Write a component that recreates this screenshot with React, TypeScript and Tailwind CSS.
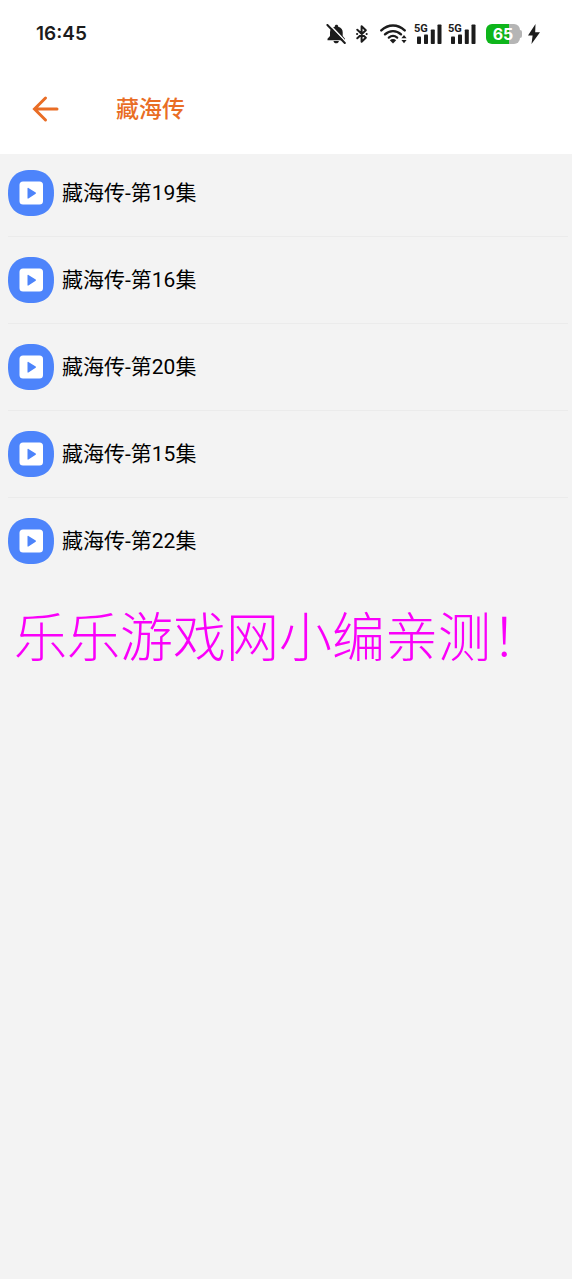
interface Episode {
  id: number;
  title: string;
}

const episodes: Episode[] = [
  { id: 19, title: "藏海传-第19集" },
  { id: 16, title: "藏海传-第16集" },
  { id: 20, title: "藏海传-第20集" },
  { id: 15, title: "藏海传-第15集" },
  { id: 22, title: "藏海传-第22集" },
];

function MutedBellIcon() {
  return (
    <svg className="w-5 h-5" viewBox="0 0 20 20" fill="currentColor" aria-hidden="true">
      <path d="M10.500 .8c1 0 1.700.7 1.700 1.600v.4c2.800.7 4.500 2.800 4.500 5.500v3.700l2.300 2.700v1.600H1.500v-1.600l2.500-2.700V8.300c0-2.700 1.900-4.800 4.800-5.500v-.4c0-.9.700-1.600 1.700-1.600z" />
      <path d="M7.500 16.900h5.400c-.2 1.400-1.300 2.300-2.700 2.300s-2.500-.9-2.700-2.300z" />
      <path d="M3.200 .2l16.600 17.600" stroke="white" strokeWidth="1.600" />
      <path d="M1.400 1l17.400 18" stroke="currentColor" strokeWidth="2" strokeLinecap="round" />
    </svg>
  );
}

function BluetoothIcon() {
  return (
    <svg className="w-3 h-5" viewBox="0 0 12 20" fill="none" stroke="currentColor" strokeWidth="2" strokeLinejoin="round" strokeLinecap="round" aria-hidden="true">
      <path d="M1.300 5.800l8.500 7.900-4.200 4V2.300l4.200 4-8.500 7.900" />
      <path d="M1 10h.2M10.600 10h.1" />
    </svg>
  );
}

function WifiIcon() {
  return (
    <svg className="w-7 h-5" viewBox="0 0 28 20" fill="none" stroke="currentColor" strokeLinecap="round" aria-hidden="true">
      <path d="M1.300 6.400C8.300-.1 17.700-.1 24.700 6.400" strokeWidth="2.400" />
      <path d="M5 10.300c4.500-4.300 11.500-4.300 16 0" strokeWidth="2.400" />
      <path d="M8.800 13.700c2.600-2.200 5.800-2.200 8.400 0" strokeWidth="2.200" />
      <path d="M9.800 16.200c1.800-1.500 4.600-1.500 6.400 0L13 19.600z" fill="currentColor" stroke="none" />
      <path d="M21.400 14.200l2.600-3.200 2.600 3.200zM21.400 16l2.600 3.200 2.600-3.200z" fill="currentColor" stroke="none" />
    </svg>
  );
}

function SignalIcon() {
  return (
    <span className="relative block w-7 h-5">
      <svg className="w-7 h-5" viewBox="0 0 28 20" fill="currentColor" aria-hidden="true">
        <rect x="3" y="12.500" width="4" height="7.500" rx=".8" />
        <rect x="10" y="10.500" width="4" height="9.500" rx=".8" />
        <rect x="16.800" y="5.500" width="4" height="14.500" rx=".8" />
        <rect x="23.500" y=".5" width="4" height="19.500" rx=".8" />
      </svg>
      <span className="absolute left-0 top-0 text-[11px] leading-[10px] font-bold font-['Roboto',sans-serif]">5G</span>
    </span>
  );
}

function Battery() {
  return (
    <div className="flex items-center">
      <div className="flex w-[34px] h-5 items-center justify-center rounded-md bg-linear-to-r from-[#0eb51b] from-68% to-[#b5b5b5] to-68% text-[16px] leading-5 font-bold text-white">
        65
      </div>
      <div className="w-0.5 h-2 rounded-r-sm bg-[#b5b5b5]" />
    </div>
  );
}

function BoltIcon() {
  return (
    <svg className="w-3 h-5" viewBox="0 0 12 20" fill="currentColor" aria-hidden="true">
      <path d="M7.500 0L0 11.500h4.600L3.500 20 12 8.300H7.200z" />
    </svg>
  );
}

function StatusBar() {
  return (
    <div className="flex h-[68px] items-center justify-between pl-9 pr-8 text-[#1c1c1c] font-['Inter',sans-serif]">
      <span className="text-[19px] leading-6 font-semibold">16:45</span>
      <div className="flex items-center gap-1.5">
        <MutedBellIcon />
        <div className="pl-1">
          <BluetoothIcon />
        </div>
        <div className="pl-1.5">
          <WifiIcon />
        </div>
        <SignalIcon />
        <SignalIcon />
        <div className="pl-1">
          <Battery />
        </div>
        <BoltIcon />
      </div>
    </div>
  );
}

function PlayBadge() {
  return (
    <svg className="w-[46px] h-[46px] shrink-0" viewBox="0 0 46 46" aria-hidden="true">
      <path d="M23 0C38 0 46 8 46 23S38 46 23 46 0 38 0 23 8 0 23 0z" fill="#4d84fb" />
      <rect x="11.500" y="11.500" width="23.500" height="23" rx="3.500" fill="white" />
      <path d="M19.500 18.300v9.800c0 .5.500.7.900.4l7.300-4.700c.4-.3.400-.9 0-1.200l-7.300-4.700c-.4-.3-.9-.1-.9.400z" fill="#4d84fb" />
    </svg>
  );
}

export default function App() {
  return (
    <div className="min-h-screen bg-[#f3f3f3] text-black font-['Roboto','Noto_Sans_CJK_SC',sans-serif]">
      <header className="bg-white">
        <StatusBar />
        {/* Title bar */}
        <div className="flex h-[86px] items-start gap-14 pl-8 pt-[27px] text-[#e96d25]">
          <button type="button" aria-label="返回" className="flex w-7 items-center">
            <svg className="w-7 h-7" viewBox="0 0 28 28" fill="none" stroke="currentColor" strokeWidth="3" strokeLinecap="round" aria-hidden="true">
              <path d="M25 14H3M13.500 3L2.500 14l11 11" />
            </svg>
          </button>
          <h1 className="text-[23px] leading-[30px] font-medium">藏海传</h1>
        </div>
      </header>

      <main>
        <ul className="ml-2 mr-1 pt-4">
          {episodes.map((episode) => (
            <li key={episode.id} className="border-b border-[#ebebeb] py-5 first:pt-0 last:border-b-0">
              <button type="button" className="flex w-full items-center gap-2 text-left">
                <PlayBadge />
                <span className="text-[21px] leading-7">{episode.title}</span>
              </button>
            </li>
          ))}
        </ul>
        <p className="pl-3.5 pt-5 text-[53px] leading-[60px] font-light whitespace-nowrap text-[#fa00fa] font-['Noto_Sans_CJK_SC',serif]">
          乐乐游戏网小编亲测！
        </p>
      </main>
    </div>
  );
}
